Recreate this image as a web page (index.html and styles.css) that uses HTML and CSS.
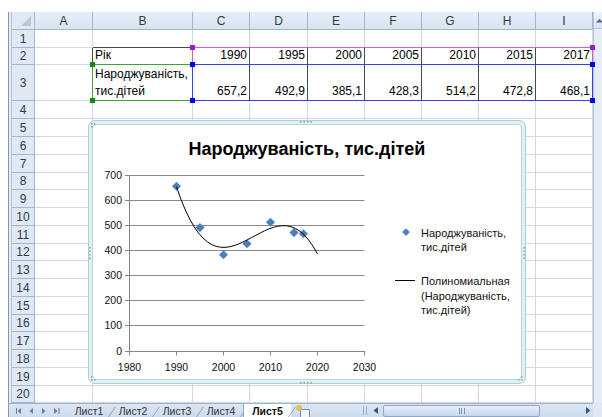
FILE: index.html
```html
<!DOCTYPE html>
<html lang="uk">
<head>
<meta charset="utf-8">
<title>Лист5</title>
<link rel="stylesheet" href="styles.css">
</head>
<body>
<div class="app">
  <div class="main">
    <div class="edge"></div>
    <div class="sheet">
      <div class="corner"></div>
      <div class="ch">A</div><div class="ch">B</div><div class="ch">C</div><div class="ch">D</div><div class="ch">E</div><div class="ch">F</div><div class="ch">G</div><div class="ch">H</div><div class="ch">I</div>

      <div class="rh">1</div><i></i><i class="tt"></i><i class="tt"></i><i class="tt"></i><i class="tt"></i><i class="tt"></i><i class="tt"></i><i class="tt"></i><i class="tt"></i>

      <div class="rh">2</div><i class="tl"></i>
      <div class="c">Рік</div>
      <div class="c n">1990</div><div class="c n">1995</div><div class="c n">2000</div><div class="c n">2005</div><div class="c n">2010</div><div class="c n">2015</div><div class="c n">2017</div>

      <div class="rh">3</div><i class="tl"></i>
      <div class="c w">Народжуваність, тис.дітей</div>
      <div class="c n">657,2</div><div class="c n">492,9</div><div class="c n">385,1</div><div class="c n">428,3</div><div class="c n">514,2</div><div class="c n">472,8</div><div class="c n">468,1</div>

      <div class="rh">4</div><i></i><i></i><i></i><i></i><i></i><i></i><i></i><i></i><i></i>
      <div class="rh">5</div><i></i><i></i><i></i><i></i><i></i><i></i><i></i><i></i><i></i>
      <div class="rh">6</div><i></i><i></i><i></i><i></i><i></i><i></i><i></i><i></i><i></i>
      <div class="rh">7</div><i></i><i></i><i></i><i></i><i></i><i></i><i></i><i></i><i></i>
      <div class="rh">8</div><i></i><i></i><i></i><i></i><i></i><i></i><i></i><i></i><i></i>
      <div class="rh">9</div><i></i><i></i><i></i><i></i><i></i><i></i><i></i><i></i><i></i>
      <div class="rh">10</div><i></i><i></i><i></i><i></i><i></i><i></i><i></i><i></i><i></i>
      <div class="rh">11</div><i></i><i></i><i></i><i></i><i></i><i></i><i></i><i></i><i></i>
      <div class="rh">12</div><i></i><i></i><i></i><i></i><i></i><i></i><i></i><i></i><i></i>
      <div class="rh">13</div><i></i><i></i><i></i><i></i><i></i><i></i><i></i><i></i><i></i>
      <div class="rh">14</div><i></i><i></i><i></i><i></i><i></i><i></i><i></i><i></i><i></i>
      <div class="rh">15</div><i></i><i></i><i></i><i></i><i></i><i></i><i></i><i></i><i></i>
      <div class="rh">16</div><i></i><i></i><i></i><i></i><i></i><i></i><i></i><i></i><i></i>
      <div class="rh">17</div><i></i><i></i><i></i><i></i><i></i><i></i><i></i><i></i><i></i>
      <div class="rh">18</div><i></i><i></i><i></i><i></i><i></i><i></i><i></i><i></i><i></i>
      <div class="rh">19</div><i></i><i></i><i></i><i></i><i></i><i></i><i></i><i></i><i></i>
      <div class="rh">20</div><i></i><i></i><i></i><i></i><i></i><i></i><i></i><i></i><i></i>

      <!-- source-range highlights of the selected chart -->
      <div class="sel sel-cat"><span class="h tl"></span><span class="h tr"></span></div>
      <div class="sel sel-name"><span class="h tl"></span><span class="h bl"></span><span class="h br"></span></div>
      <div class="sel sel-val"><span class="h tl"></span><span class="h tr"></span><span class="h bl"></span><span class="h br"></span></div>

      <!-- embedded scatter chart -->
      <div class="chart">
        <div class="chart-area"></div>
        <svg class="plot" width="438" height="264" viewBox="0 0 438 264">
          <g class="grips">
            <rect x="3" y="3" width="1.5" height="1.5"/><rect x="6" y="3" width="1.5" height="1.5"/><rect x="3" y="6" width="1.5" height="1.5"/>
            <rect x="212" y="1" width="1.5" height="1.5"/><rect x="215.5" y="1" width="1.5" height="1.5"/><rect x="219" y="1" width="1.5" height="1.5"/><rect x="222.5" y="1" width="1.5" height="1.5"/>
            <rect x="212" y="262" width="1.5" height="1.5"/><rect x="215.5" y="262" width="1.5" height="1.5"/><rect x="219" y="262" width="1.5" height="1.5"/><rect x="222.5" y="262" width="1.5" height="1.5"/>
            <rect x="1" y="127" width="1.5" height="1.5"/><rect x="1" y="130.5" width="1.5" height="1.5"/><rect x="1" y="134" width="1.5" height="1.5"/><rect x="1" y="137.5" width="1.5" height="1.5"/>
            <rect x="435.5" y="127" width="1.5" height="1.5"/><rect x="435.5" y="130.5" width="1.5" height="1.5"/><rect x="435.5" y="134" width="1.5" height="1.5"/><rect x="435.5" y="137.5" width="1.5" height="1.5"/>
            <rect x="3" y="259" width="1.5" height="1.5"/><rect x="6" y="259" width="1.5" height="1.5"/><rect x="3" y="256" width="1.5" height="1.5"/>
            <rect x="433" y="259" width="1.5" height="1.5"/><rect x="430" y="259" width="1.5" height="1.5"/><rect x="433" y="256" width="1.5" height="1.5"/>
          </g>

          <text class="title" x="219" y="35" text-anchor="middle">Народжуваність, тис.дітей</text>

          <path class="gridlines" d="M41 55.5H276.5M41 80.5H276.5M41 105.5H276.5M41 130.5H276.5M41 155.5H276.5M41 180.5H276.5M41 205.5H276.5"/>
          <path class="axis" d="M41.5 55V231.5M37 55.5H41M37 80.5H41M37 105.5H41M37 130.5H41M37 155.5H41M37 180.5H41M37 205.5H41M37 231.5H276.5M41.5 231V235.5M88.5 231V235.5M135.5 231V235.5M182.5 231V235.5M229.5 231V235.5M276.5 231V235.5"/>

          <g class="ylabels" text-anchor="end">
            <text x="34" y="59">700</text>
            <text x="34" y="84">600</text>
            <text x="34" y="109">500</text>
            <text x="34" y="134">400</text>
            <text x="34" y="159">300</text>
            <text x="34" y="184">200</text>
            <text x="34" y="209">100</text>
            <text x="34" y="235">0</text>
          </g>
          <g class="xlabels" text-anchor="middle">
            <text x="41.5" y="251">1980</text>
            <text x="88.5" y="251">1990</text>
            <text x="135.5" y="251">2000</text>
            <text x="182.5" y="251">2010</text>
            <text x="229.5" y="251">2020</text>
            <text x="276.5" y="251">2030</text>
          </g>

          <g class="points">
            <path d="M88.5 62l4.3 4.3-4.3 4.3-4.3-4.3z"/>
            <path d="M112 103.3l4.3 4.3-4.3 4.3-4.3-4.3z"/>
            <path d="M135.5 130.4l4.3 4.3-4.3 4.3-4.3-4.3z"/>
            <path d="M159 119.5l4.3 4.3-4.3 4.3-4.3-4.3z"/>
            <path d="M182.5 97.9l4.3 4.3-4.3 4.3-4.3-4.3z"/>
            <path d="M206 108.3l4.3 4.3-4.3 4.3-4.3-4.3z"/>
            <path d="M215.4 109.5l4.3 4.3-4.3 4.3-4.3-4.3z"/>
          </g>
          <path class="trend" d="M88.5 66.8C135.5 208.75 182.5 44.4 229.5 134"/>

          <g class="legend">
            <path class="mark" d="M318 108.5l3.6 3.6-3.6 3.6-3.6-3.6z"/>
            <text x="333" y="116.5">Народжуваність,</text>
            <text x="333" y="130.5">тис.дітей</text>
            <path class="trend" d="M307 160.5H327"/>
            <text x="333" y="165">Полиномиальная</text>
            <text x="333" y="179.5">(Народжуваність,</text>
            <text x="333" y="194">тис.дітей)</text>
          </g>
        </svg>
      </div>
    </div>
    <div class="vscroll">
      <div class="vbtn">
        <svg width="9" height="16" viewBox="0 0 9 16"><path d="M2 10.5l3.5-3.5 3.5 3.5z" fill="#4d6185"/></svg>
      </div>
    </div>
  </div>

  <div class="tabbar">
    <div class="bar">
      <div class="nav">
        <svg width="58" height="13" viewBox="0 0 58 13">
          <g fill="#6c7f9a">
            <rect x="7" y="4" width="1" height="6"/><path d="M12 4v6l-3.5-3z"/>
            <path d="M24 4v6l-3.5-3z"/>
            <path d="M33 4v6l3.5-3z"/>
            <path d="M45 4v6l3.5-3z"/><rect x="49.5" y="4" width="1" height="6"/>
          </g>
        </svg>
      </div>
      <div class="tabs">
        <span class="tab">Лист1</span>
        <span class="tab">Лист2</span>
        <span class="tab">Лист3</span>
        <span class="tab">Лист4</span>
        <span class="tab on">Лист5</span>
        <span class="ins">
          <svg width="20" height="13" viewBox="0 0 20 13">
            <path d="M6.5 5.5h9v9h-9z" fill="#f4f8fd" stroke="#7a8fae"/>
            <path d="M5 1v6M2 4h6M2.8 1.8l4.4 4.4M7.2 1.8L2.8 6.2" stroke="#f0a020" stroke-width="1.2"/>
            <circle cx="5" cy="4" r="1.5" fill="#ffd34d"/>
          </svg>
        </span>
      </div>
      <div class="gap"></div>
      <div class="split"></div>
      <div class="hs">
        <svg class="arr" width="10" height="11" viewBox="0 0 10 11"><path d="M7 2v7L2.5 5.5z" fill="#40557a"/></svg>
        <div class="thumb"><span class="grip"></span></div>
        <div class="track"></div>
        <svg class="arr" width="10" height="11" viewBox="0 0 10 11"><path d="M3 2v7l4.5-3.5z" fill="#40557a"/></svg>
      </div>
    </div>
    <div class="corner-box"></div>
  </div>
</div>
</body>
</html>
```

FILE: styles.css
```css
* {
  box-sizing: border-box;
}

html,
body {
  margin: 0;
  background: #fff;
}

body {
  width: 602px;
  height: 417px;
  overflow: hidden;
  font-family: "Liberation Sans", Arial, sans-serif;
}

.app {
  display: flex;
  flex-direction: column;
  height: 417px;
  padding-top: 12px;
}

.main {
  display: flex;
  padding-left: 8px;
}

.edge {
  width: 4px;
  border-left: 1px solid #8797ab;
  border-right: 1px solid #b3c2d5;
  background: #e4ebf4;
}

/* ---------- worksheet grid ---------- */

.sheet {
  position: relative;
  display: grid;
  grid-template-columns: 23px 58px 100px 57px 58px 57px 57px 57px 57px 57px;
  grid-template-rows: 18px 18px 17px 36px 18px repeat(4, 18px 18px 18px 17px);
  font-size: 12px;
  color: #000;
}

.sheet > i {
  border-right: 1px solid #d0d7e5;
  border-bottom: 1px solid #d0d7e5;
}

.sheet > i.tt {
  border-bottom-color: #4a4a4a;
}

.sheet > i.tl {
  border-right-color: #4a4a4a;
}

.corner,
.ch,
.rh {
  background: #dfe8f3;
  border-right: 1px solid #9eb6ce;
  border-bottom: 1px solid #9eb6ce;
  color: #2f3b4c;
  display: flex;
  align-items: center;
  justify-content: center;
  font-size: 12px;
}

.ch {
  background: linear-gradient(#e6eef8, #d9e4f1);
}

.corner {
  position: relative;
}

.corner::after {
  content: "";
  position: absolute;
  right: 3px;
  bottom: 3px;
  border-style: solid;
  border-width: 0 0 10px 10px;
  border-color: transparent transparent #b9c7d8 transparent;
}

.c {
  display: flex;
  align-items: flex-end;
  padding: 0 2px 1px 2px;
  line-height: 15px;
  border-right: 1px solid #4a4a4a;
  border-bottom: 1px solid #4a4a4a;
  white-space: nowrap;
}

.c.n {
  justify-content: flex-end;
}

.c.w {
  white-space: normal;
  line-height: 17px;
  padding-bottom: 0;
}

/* chart source ranges */

.sel {
  position: absolute;
  top: -1px;
  left: -1px;
  right: 0;
  bottom: 0;
  border: 1px solid;
}

.sel-cat {
  grid-row: 3 / 4;
  grid-column: 4 / 11;
  border-color: #c860d8;
}

.sel-name {
  grid-row: 4 / 5;
  grid-column: 3 / 4;
  border-color: #3aa33a;
}

.sel-val {
  grid-row: 4 / 5;
  grid-column: 4 / 11;
  border-color: #3c3cf0;
}

.h {
  position: absolute;
  width: 5px;
  height: 5px;
}

.sel-cat .h { background: #9b1fc0; }
.sel-name .h { background: #128a12; }
.sel-val .h { background: #0000ee; }

.h.tl { top: -3px; left: -3px; }
.h.tr { top: -3px; right: -3px; }
.h.bl { bottom: -3px; left: -3px; }
.h.br { bottom: -3px; right: -3px; }

/* ---------- chart object ---------- */

.chart {
  position: absolute;
  left: 76px;
  top: 108px;
  width: 438px;
  height: 264px;
  border: 1px solid #b3ced3;
  border-radius: 7px;
  background: #def1f3;
  padding: 3px;
}

.chart-area {
  height: 100%;
  background: #fff;
  border: 1px solid #bcd7db;
  border-radius: 4px;
}

.plot {
  position: absolute;
  top: -1px;
  left: -1px;
}

.plot text {
  font-family: "Liberation Sans", Arial, sans-serif;
  font-size: 10.5px;
  fill: #111;
}

.plot .title {
  font-size: 18px;
  font-weight: bold;
  fill: #000;
}

.plot .legend text {
  font-size: 11px;
}

.grips rect {
  fill: #8aa2a8;
}

.gridlines {
  stroke: #8a8a8a;
  stroke-width: 1;
  fill: none;
}

.axis {
  stroke: #868686;
  stroke-width: 1;
  fill: none;
}

.points path,
.legend .mark {
  fill: #4a7ebb;
  stroke: #5d8cc6;
  stroke-width: 0.5;
}

.trend {
  fill: none;
  stroke: #000;
  stroke-width: 1;
}

/* ---------- vertical scrollbar ---------- */

.vscroll {
  width: 9px;
  background: #e6edf7;
  border-left: 1px solid #b5c5da;
}

.vbtn {
  height: 17px;
  border-bottom: 1px solid #b5c5da;
  background: linear-gradient(#eef3fa, #d8e3f1);
}

.vbtn svg {
  display: block;
}

/* ---------- sheet tabs and horizontal scrollbar ---------- */

.tabbar {
  display: flex;
  height: 14px;
  padding-left: 8px;
  overflow: hidden;
}

.bar {
  flex: 1;
  display: flex;
  background: linear-gradient(#dbe6f4, #cddbed);
  border-top: 1px solid #9db2cc;
  border-left: 1px solid #8797ab;
}

.nav {
  width: 58px;
}

.nav svg {
  display: block;
}

.tabs {
  display: flex;
}

.tab {
  position: relative;
  width: 44px;
  text-align: center;
  font-size: 10.5px;
  line-height: 13px;
  padding-top: 1px;
  color: #333;
}

.tab::after {
  content: "";
  position: absolute;
  right: 0;
  top: 3px;
  bottom: -4px;
  border-right: 1px solid #8ea3be;
  transform: skewX(-35deg);
}

.tab.on {
  width: 48px;
  font-weight: bold;
  background: #fff;
  border-left: 1px solid #8ea3be;
  color: #111;
}

.ins {
  width: 24px;
  padding-left: 3px;
}

.ins svg {
  display: block;
}

.gap {
  width: 48px;
}

.split {
  width: 4px;
  margin: 2px 0;
  border-left: 1px solid #9aaec8;
  border-right: 1px solid #9aaec8;
}

.hs {
  flex: 1;
  display: flex;
  align-items: center;
  padding-left: 4px;
}

.arr {
  display: block;
}

.thumb {
  width: 157px;
  height: 12px;
  margin-left: 2px;
  border: 1px solid #8fa6c4;
  border-radius: 2px;
  background: linear-gradient(#e9f0fa, #c6d6ec);
  display: flex;
  align-items: center;
  justify-content: center;
}

.grip {
  width: 6px;
  height: 6px;
  border-left: 1px solid #7f93b0;
  border-right: 1px solid #7f93b0;
  position: relative;
}

.grip::after {
  content: "";
  position: absolute;
  left: 1.5px;
  top: 0;
  bottom: 0;
  border-left: 1px solid #7f93b0;
}

.track {
  flex: 1;
}

.corner-box {
  width: 9px;
  background: #dfe8f3;
}
```
